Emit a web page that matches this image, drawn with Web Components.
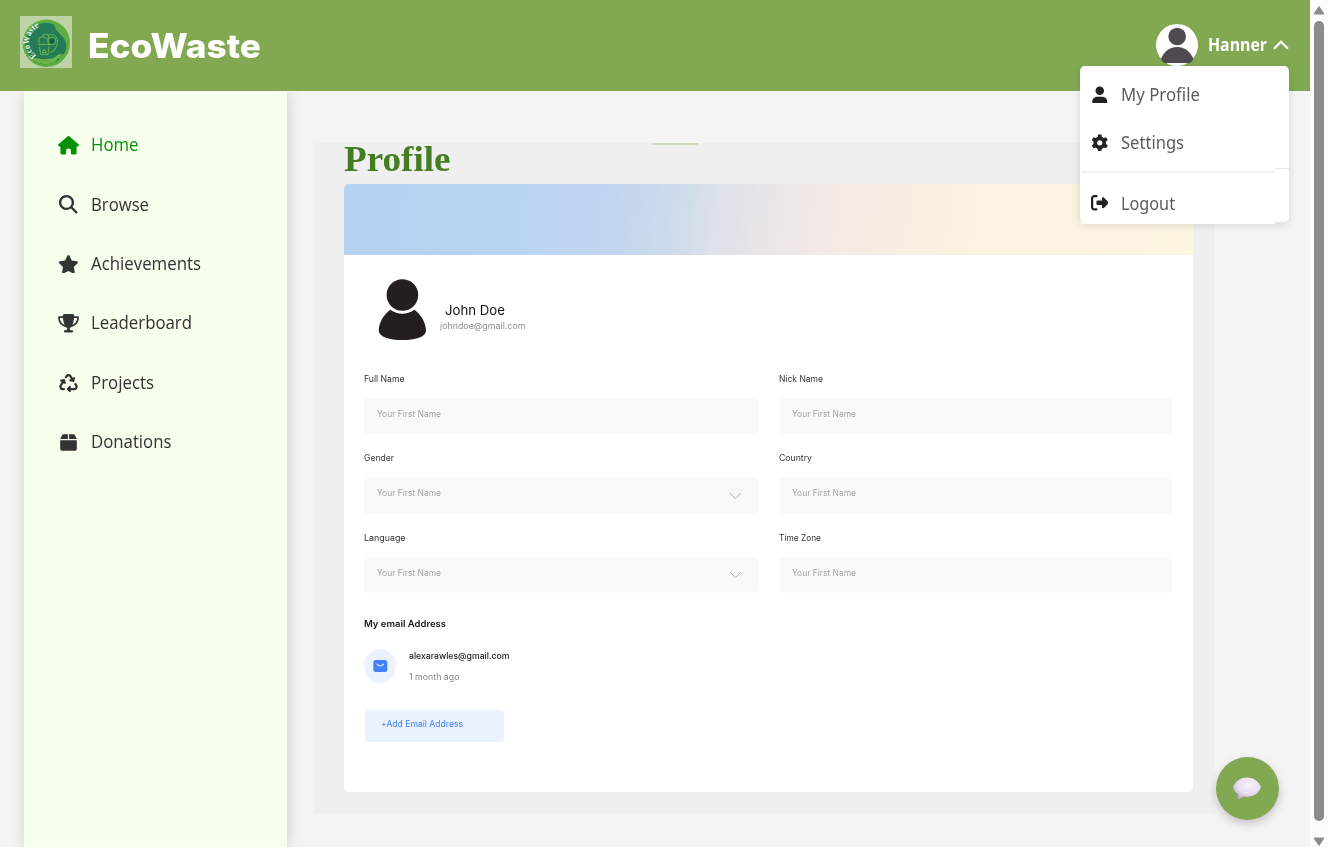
<!DOCTYPE html>
<html lang="en">
<head>
<meta charset="utf-8">
<title>EcoWaste</title>
<style>
html,body{margin:0;height:100%;overflow:hidden;background:#f4f4f4}
body{font-family:"Open Sans","Noto Sans",sans-serif;color:#333}
</style>
</head>
<body>
<eco-app></eco-app>
<script>
const define = (name, html, setup) => customElements.define(name, class extends HTMLElement {
  connectedCallback() {
    if (this.shadowRoot) return;
    const t = document.createElement('template');
    t.innerHTML = typeof html === 'function' ? html(this) : html;
    this.attachShadow({mode:'open'}).append(t.content.cloneNode(true));
    if (setup) setup(this);
  }
});

/* A single line of text set to a given width */
define('fit-text', e => `<style>
:host{display:block;width:${e.getAttribute('w')}px;white-space:nowrap;flex:none}
span{display:inline-block;transform-origin:0 50%}
</style><span><slot></slot></span>`, e => {
  const s = e.shadowRoot.querySelector('span');
  const fit = () => { s.style.transform = 'none'; const w = s.getBoundingClientRect().width;
    if (w) s.style.transform = `scaleX(${e.getAttribute('w') / w})`; };
  fit(); requestAnimationFrame(fit);
});

const ICONS = {
  house:['0 0 576 512','<path d="M575.8 255.5c0 18-15 32.1-32 32.1h-32l.7 160.2c0 2.7-.2 5.4-.5 8.1V472c0 22.1-17.9 40-40 40H392c-22.1 0-40-17.9-40-40V384c0-17.7-14.3-32-32-32H256c-17.7 0-32 14.3-32 32v88c0 22.1-17.9 40-40 40H104c-22.1 0-40-17.9-40-40V287.6H32c-18 0-32-14-32-32.1c0-9 3-17 10-24L266.4 8c7-7 15-8 22-8s15 2 21 7L564.8 231.5c8 7 12 15 11 24z"/>'],
  search:['0 0 512 512','<path d="M416 208c0 45.9-14.9 88.3-40 122.7L502.6 457.4c12.5 12.5 12.5 32.8 0 45.3s-32.8 12.5-45.3 0L330.7 376c-34.4 25.2-76.8 40-122.7 40C93.1 416 0 322.9 0 208S93.1 0 208 0S416 93.1 416 208zM208 352a144 144 0 1 0 0-288 144 144 0 1 0 0 288z"/>'],
  star:['0 0 576 512','<path d="M316.9 18C311.6 7 300.4 0 288.1 0s-23.4 7-28.8 18L195 150.3 51.4 171.5c-12 1.8-22 10.2-25.7 21.7s-.7 24.2 7.9 32.7L137.8 329 113.2 474.7c-2 12 3 24.2 12.9 31.3s23 8 33.8 2.3l128.3-68.5 128.3 68.5c10.8 5.7 23.9 4.9 33.8-2.3s14.9-19.3 12.9-31.3L438.5 329 542.7 225.9c8.6-8.5 11.7-21.2 7.9-32.7s-13.7-19.9-25.7-21.7L381.2 150.3 316.9 18z"/>'],
  trophy:['0 0 576 512','<path d="M400 0H176c-26.5 0-48.1 21.8-47.1 48.2c.2 5.3 .4 10.6 .7 15.8H24C10.7 64 0 74.7 0 88c0 92.6 33.5 157 78.5 200.7c44.3 43.1 98.3 64.8 138.1 75.8c23.4 6.5 39.4 26 39.4 45.6c0 20.9-17 37.9-37.9 37.9H192c-17.7 0-32 14.3-32 32s14.3 32 32 32H384c17.7 0 32-14.3 32-32s-14.3-32-32-32H357.9C337 448 320 431 320 410.1c0-19.6 15.9-39.2 39.4-45.6c39.9-11 93.9-32.7 138.2-75.8C542.5 245 576 180.6 576 88c0-13.3-10.7-24-24-24H446.4c.3-5.2 .5-10.4 .7-15.8C448.1 21.8 426.5 0 400 0zM48.9 112h84.4c9.1 90.1 29.2 150.3 51.9 190.6c-24.9-11-50.8-26.5-73.2-48.3c-32-31.1-58-76-63-142.3zM464.1 254.3c-22.4 21.8-48.3 37.3-73.2 48.3c22.7-40.3 42.8-100.5 51.9-190.6h84.4c-5.1 66.3-31.1 111.2-63 142.3z"/>'],
  recycle:['0 0 512 512','<path d="M174.7 45.1C192.2 17 223 0 256 0s63.8 17 81.3 45.1l38.6 61.7 27-15.6c8.4-4.9 18.9-4.2 26.6 1.7s11.1 15.9 8.6 25.3l-23.4 87.4c-3.4 12.8-16.6 20.4-29.4 17l-87.4-23.4c-9.4-2.5-16.3-10.4-17.6-20s3.4-19.1 11.8-23.9l28.4-16.4L283 79c-5.8-9.3-16-15-27-15s-21.2 5.7-27 15l-17.5 28c-9.2 14.8-28.6 19.5-43.6 10.5c-15.3-9.2-20.2-29.2-10.7-44.4l17.5-28zM429.5 251.9c15-9 34.4-4.3 43.6 10.5l24.4 39.1c9.4 15.1 14.4 32.4 14.6 50.2c.3 53.1-42.7 96.4-95.8 96.4L320 448v32c0 9.7-5.8 18.5-14.8 22.2s-19.3 1.7-26.2-5.2l-64-64c-9.4-9.4-9.4-24.6 0-33.9l64-64c6.9-6.9 17.2-8.9 26.2-5.2s14.8 12.5 14.8 22.2v32l96.2 0c17.6 0 31.9-14.4 31.8-32c0-5.9-1.7-11.7-4.8-16.7l-24.4-39.1c-9.5-15.2-4.7-35.2 10.7-44.4zm-364.6-31L36 204.2c-8.4-4.9-13.1-14.3-11.8-23.9s8.2-17.5 17.6-20l87.4-23.4c12.8-3.4 26 4.2 29.4 17L182 241.2c2.5 9.4-.9 19.3-8.6 25.3s-18.2 6.6-26.6 1.7l-26.5-15.3L68.8 335.3c-3.1 5-4.8 10.8-4.8 16.7c-.1 17.6 14.2 32 31.8 32l32.2 0c17.7 0 32 14.3 32 32s-14.3 32-32 32l-32.2 0C42.7 448-.3 404.8 0 351.6c.1-17.8 5.1-35.1 14.6-50.2l50.3-80.5z"/>'],
  box:['0 0 448 512','<path d="M50.7 58.5L0 160H208V32H93.7C75.5 32 58.9 42.3 50.7 58.5zM240 160H448L397.3 58.5C389.1 42.3 372.5 32 354.3 32H240V160zm208 32H0V416c0 35.3 28.7 64 64 64H384c35.3 0 64-28.7 64-64V192z"/>'],
  logout:['0 0 512 512','<path d="M377.9 105.9L500.7 228.7c7.2 7.2 11.3 17.1 11.3 27.3s-4.1 20.1-11.3 27.3L377.9 406.1c-6.4 6.4-15 9.9-24 9.9c-18.7 0-33.9-15.2-33.9-33.9l0-62.1-128 0c-17.7 0-32-14.3-32-32l0-64c0-17.700 14.3-32 32-32l128 0 0-62.1c0-18.7 15.2-33.9 33.9-33.9c9 0 17.6 3.6 24 9.9zM160 96L96 96c-17.7 0-32 14.3-32 32l0 256c0 17.7 14.3 32 32 32l64 0c17.7 0 32 14.3 32 32s-14.3 32-32 32l-64 0c-53 0-96-43-96-96L0 128C0 75 43 32 96 32l64 0c17.7 0 32 14.3 32 32s-14.3 32-32 32z"/>'],
  user:['0 0 16 18','<ellipse cx="8" cy="4.8" rx="4.4" ry="4.400"/><path d="M.4 17.4v-1.6c0-3 2.300-4.700 5.600-4.700h4c3.300 0 5.600 1.700 5.600 4.700v1.600z"/>'],
  gear:['-9 -9 18 18',`<circle r="4.6" fill="none" stroke="currentColor" stroke-width="3.800"/>${[0,60,120,180,240,300].map(a=>`<path transform="rotate(${a})" d="M-2.300-5.500L-1.700-8.500H1.700L2.300-5.500z"/>`).join('')}`]
};
define('eco-icon', e => { const [vb,p] = ICONS[e.getAttribute('name')]; return `<style>
:host{display:flex;justify-content:center;align-items:center;flex:none}svg{display:block}</style>
<svg width="${e.getAttribute('w')}" height="${e.getAttribute('h')}" viewBox="${vb}" fill="currentColor">${p}</svg>`; });

define('eco-logo', `<style>:host{display:block;width:52px;height:52px;flex:none}svg{display:block}</style>
<svg width="52" height="52" viewBox="0 0 52 52">
<rect width="52" height="52" fill="#bdd3a6"/>
<circle cx="26.300" cy="27.300" r="23.700" fill="#5fae43"/>
<circle cx="26" cy="27.600" r="20.800" fill="#247c57"/>
<path d="M34 6c0 6 3 9 8 14 4 4 5 9 4.500 15 3-5 3.500-11 1.500-17C45.500 11 40 7 34 6z" fill="#5fae43"/>
<path d="M11 42.500c4-1.500 8 .5 13 .8l8-.8c3-1 5-3 8-5l1.500 1L35 46c-8 4-17 2.500-24-3.500z" fill="#6ab446"/>
<path d="M36 44l1.500-5M39 43l2.500-5M41 42l2.500-3.500" stroke="#6ab446" stroke-width="1.300"/>
<g fill="none" stroke="#71b852" stroke-width=".9">
<path d="M18 28.500h12M19.500 30.500l1 8h7.500l1-8M19 27v-5l4-1.500 1-2.500 4 .5 1 4M28 19.500c3-2 6-1 7 0l2.500 4-.5 6-3 5-4 2"/>
<circle cx="32" cy="25" r="4"/><path d="M22.300 36.500l2-3.500 2 3.500z"/><path d="M23 21l5 2v4"/></g>
<circle cx="32" cy="25" r="2.200" fill="#0c5e45"/>
<defs><path id="arc" d="M16.300 39.500A16 16 0 0 1 34.500 12.600"/></defs>
<text font-family="Liberation Serif,serif" font-weight="700" font-size="8.800" fill="#eef6ec"><textPath href="#arc" textLength="35" lengthAdjust="spacingAndGlyphs">EcoWaste</textPath></text>
</svg>`);

define('eco-header', `<style>
:host{display:flex;align-items:flex-start;height:91.4px;background:#82a952;color:#fff;box-sizing:border-box;padding:16px 20.600px 0 19.700px}
.brand{margin:2.500px 0 0 16.300px;font:800 33.500px/54px Inter,sans-serif}
.who{margin-left:auto;display:flex;align-items:center;margin-top:8px}
.name{margin:0 6px 0 10px;font:700 17.300px/42px "Open Sans",sans-serif}
svg{display:block}
</style>
<eco-logo></eco-logo><fit-text class="brand" w="173">EcoWaste</fit-text>
<div class="who">
<svg width="42" height="42" viewBox="0 0 42 42"><circle cx="21" cy="21" r="21" fill="#fff"/><circle cx="21.200" cy="12.500" r="8.800" fill="#4d4b4e"/><path d="M5 35c3-8 9-12 16.200-12S34 27 37.500 35c-1.500 2-2.500 3-3.500 4H8c-1-1-2-2-3-4z" fill="#4d4b4e"/></svg>
<fit-text class="name" w="59">Hanner</fit-text>
<svg width="16" height="10" viewBox="0 0 16 10" fill="none" stroke="#fff" stroke-width="2.300" stroke-linecap="round"><path d="M1.700 8L8 1.800 14.300 8"/></svg>
</div>`);

define('nav-item', e => `<style>
:host{display:flex;align-items:center;height:59.400px;gap:12px;color:#333}
:host([active]){color:#089108}
eco-icon{width:22px}
.t{font:400 17.300px/26px "Open Sans",sans-serif}
</style><eco-icon name="${e.getAttribute('icon')}" w="${e.getAttribute('iw')}" h="${e.getAttribute('ih')||18.5}"></eco-icon>
<fit-text class="t" w="${e.getAttribute('w')}"><slot></slot></fit-text>`);

define('eco-sidebar', `<style>
:host{display:block;width:262.500px;flex:none;box-sizing:border-box;padding:24.200px 0 0 33.400px;background:#f6ffeb;box-shadow:1px 0 14px rgba(0,0,0,.16);margin-left:24px;clip-path:inset(0 -30px 0 -24px)}
</style>
<nav-item active icon="house" iw="21" w="47.500">Home</nav-item>
<nav-item icon="search" iw="18.500" w="58">Browse</nav-item>
<nav-item icon="star" iw="20.800" w="110">Achievements</nav-item>
<nav-item icon="trophy" iw="21" w="101">Leaderboard</nav-item>
<nav-item icon="recycle" iw="19" w="63">Projects</nav-item>
<nav-item icon="box" iw="17" ih="19" w="80.500">Donations</nav-item>`);

define('form-field', e => `<style>
:host{display:block;height:62px}
.l{font:400 8.300px/12px Inter,sans-serif;color:#333}
.in{margin-top:13.400px;height:36.300px;background:#f9f9f9;border-radius:3px;display:flex;justify-content:space-between;box-sizing:border-box;padding:10px 15.200px 0 13.300px}
.p{font:400 8.300px/12px Inter,sans-serif;color:#a3a3a3}
svg{margin-top:4.500px}
</style><fit-text class="l" w="${e.getAttribute('w')}"><slot></slot></fit-text>
<div class="in"><fit-text class="p" w="64">Your First Name</fit-text>${e.hasAttribute('select')?'<svg width="13" height="8" viewBox="0 0 13 8" fill="none" stroke="#a6a6a6" stroke-width="1"><path d="M1 1l4.400 4.700q1.100 1.100 2.200 0L12 1"/></svg>':''}</div>`);

define('profile-card', `<style>
:host{display:block;height:607.500px;background:#fff;border-radius:5px;overflow:hidden;font-family:Inter,sans-serif}
.banner{height:71px;background:linear-gradient(98deg,#b5d2f2 0,#b8d4f2 20%,#c2d5f0 32%,#cddbea 39%,#dde1ea 44%,#e7e5e7 49%,#f2e8e6 55%,#f8ede2 64%,#fbf2e0 74%,#fcf5e0 100%)}
.id{display:flex;padding:23.500px 0 0 34px;height:117.300px;box-sizing:border-box}
.id svg{flex:none}
.n{font-size:13px;line-height:18px;color:#111;margin:22.500px 0 0 18.300px}
.m{font-size:8.700px;line-height:12px;color:#8d8d8d;margin:1px 0 0 12.800px}
.grid{display:grid;grid-template-columns:393.500px 393.500px;column-gap:21px;row-gap:17.500px;padding:0 0 0 20.300px}
h2{margin:23.200px 0 0 20.500px;font:600 9px/14px Inter,sans-serif;color:#151515}
.mail{display:flex;margin:18.500px 0 0 20.500px;gap:13px;height:34px}
.mail b{font:500 8.600px/12px Inter,sans-serif;color:#222;display:block}
.mail i{font:400 8.500px/12px Inter,sans-serif;color:#858585;display:block;margin-top:9px}
.tx{margin-top:.5px}
.add{margin:27px 0 0 20.800px;width:139px;height:31.500px;background:#ebf2ff;border-radius:3px;box-sizing:border-box;padding:7.800px 0 0 16px;font-size:8.300px;line-height:12px;color:#4182f9}
</style>
<div class="banner"></div>
<div class="id">
<svg width="49" height="62" viewBox="0 0 49 62" fill="#231f20"><circle cx="24.400" cy="16" r="15.800"/><path d="M12.300 30.700Q24.400 38.800 36.500 30.700C43 35.300 48 44 48 51.700 48 58 37 61 24.400 61S.8 58 .8 51.700C.8 44 5.500 35.300 12.300 30.700z"/></svg>
<div><fit-text class="n" w="60">John Doe</fit-text><fit-text class="m" w="85.500">johndoe@gmail.com</fit-text></div>
</div>
<div class="grid">
<form-field w="40.500">Full Name</form-field><form-field w="44">Nick Name</form-field>
<form-field select w="30">Gender</form-field><form-field w="33">Country</form-field>
<form-field select w="41.500">Language</form-field><form-field w="42">Time Zone</form-field>
</div>
<h2><fit-text w="82">My email Address</fit-text></h2>
<div class="mail"><svg width="32" height="34" viewBox="0 0 32 34"><ellipse cx="16" cy="17" rx="16" ry="17" fill="#ebf2ff"/><rect x="9.300" y="11" width="14" height="12" rx="2.500" fill="#4182f9"/><path d="M13 15.200q3.200 3.600 6.600 0" fill="none" stroke="#e6efff" stroke-width="1.100" stroke-linecap="round"/></svg>
<div class="tx"><b><fit-text w="100.500">alexarawles@gmail.com</fit-text></b><i style="font-style:normal"><fit-text w="50.500">1 month ago</fit-text></i></div></div>
<div class="add"><fit-text w="82">+Add Email Address</fit-text></div>`);

define('profile-panel', `<style>
:host{display:block;width:901px;height:671px;box-sizing:border-box;background:#efefef;margin:51.900px 0 0 27.300px;padding:0 21.500px 0 30px;position:relative}
h1{margin:0;height:41px;font:700 35px/33px "Liberation Serif",serif;color:#437d1f}
.tab{position:absolute;left:338px;top:0;width:46px;height:2px;background:#cbd9bb;border-radius:0 0 6px 6px}
</style><div class="tab"></div><h1><fit-text w="106.500">Profile</fit-text></h1><profile-card></profile-card>`);

define('menu-item', e => `<style>
:host{display:flex;align-items:center;height:48px;gap:12px;padding-left:10px;filter:blur(.45px)}
eco-icon{width:18px;color:#222}
.t{font:400 17.500px/26px "Noto Sans",sans-serif;color:#5c5c5c}
</style><eco-icon name="${e.getAttribute('icon')}" w="17.500" h="17.500"></eco-icon><fit-text class="t" w="${e.getAttribute('w')}"><slot></slot></fit-text>`);

define('user-menu', `<style>
:host{position:absolute;left:1079.700px;top:66px;width:209.700px;height:156px;background:#fff;border-radius:5px;box-shadow:0 3px 10px rgba(0,0,0,.12);display:block}
.edge{position:absolute;right:0;top:102px;width:15px;height:1px;background:#e8e8e8}
.sheet{position:absolute;left:1px;top:4.300px;width:194px;height:153.700px;background:#fff}
hr{border:0;height:1.500px;background:#f0f0f0;margin:5px 0 6px}
</style><div class="edge"></div><div class="sheet">
<menu-item icon="user" w="79">My Profile</menu-item>
<menu-item icon="gear" w="63">Settings</menu-item><hr>
<menu-item icon="logout" w="54">Logout</menu-item></div>`);

define('chat-button', `<style>
:host{position:absolute;left:1215.700px;top:757px;width:63px;height:63px;border-radius:50%;background:#82a952;box-shadow:0 4px 10px rgba(0,0,0,.2);display:grid;place-items:center}
svg{margin-top:-1px}
</style><svg width="30" height="24" viewBox="0 0 30 24"><defs><radialGradient id="g" cx=".57" cy=".35" r=".65"><stop offset="0" stop-color="#f8f3fa"/><stop offset=".6" stop-color="#eadff0"/><stop offset="1" stop-color="#c0aed8"/></radialGradient></defs>
<path d="M15 1.500C23 1.500 26.500 6 29 11.300 26.500 17.500 22.500 20.500 15 20.900L12.500 20.600 6.300 23.300Q5.300 23 6.300 18.500C3.500 16.800 1.800 14.500 1 11.300 3 6 7.500 1.500 15 1.500z" fill="url(#g)"/></svg>`);

define('scroll-rail', `<style>
:host{display:flex;flex-direction:column;align-items:center;width:18px;height:847px;background:#fcfcfc;overflow:hidden}
svg{flex:none}
.thumb{width:10px;height:801px;border-radius:5px;background:#8b8b8b;margin:6px 0 16px}
</style><svg width="12" height="15" viewBox="0 0 12 15"><path d="M6 6.500L11 14H1z" fill="#8b8b8b" stroke="#8b8b8b" stroke-linejoin="round"/></svg><div class="thumb"></div>
<svg width="12" height="10" viewBox="0 0 12 10"><path d="M1 1H11L6 8.500z" fill="#8b8b8b" stroke="#8b8b8b" stroke-linejoin="round"/></svg>`);

define('eco-app', `<style>
:host{display:grid;grid-template-columns:1310px 18px;width:1328px;height:847px;overflow:hidden;position:relative}
.page{display:flex;flex-direction:column;min-height:0;height:847px;background:#f4f4f4}
.row{display:flex;flex:1;min-height:0}
</style><div class="page"><eco-header></eco-header><div class="row"><eco-sidebar></eco-sidebar><profile-panel></profile-panel></div></div>
<scroll-rail></scroll-rail><user-menu></user-menu><chat-button></chat-button>`);
</script>
</body>
</html>
